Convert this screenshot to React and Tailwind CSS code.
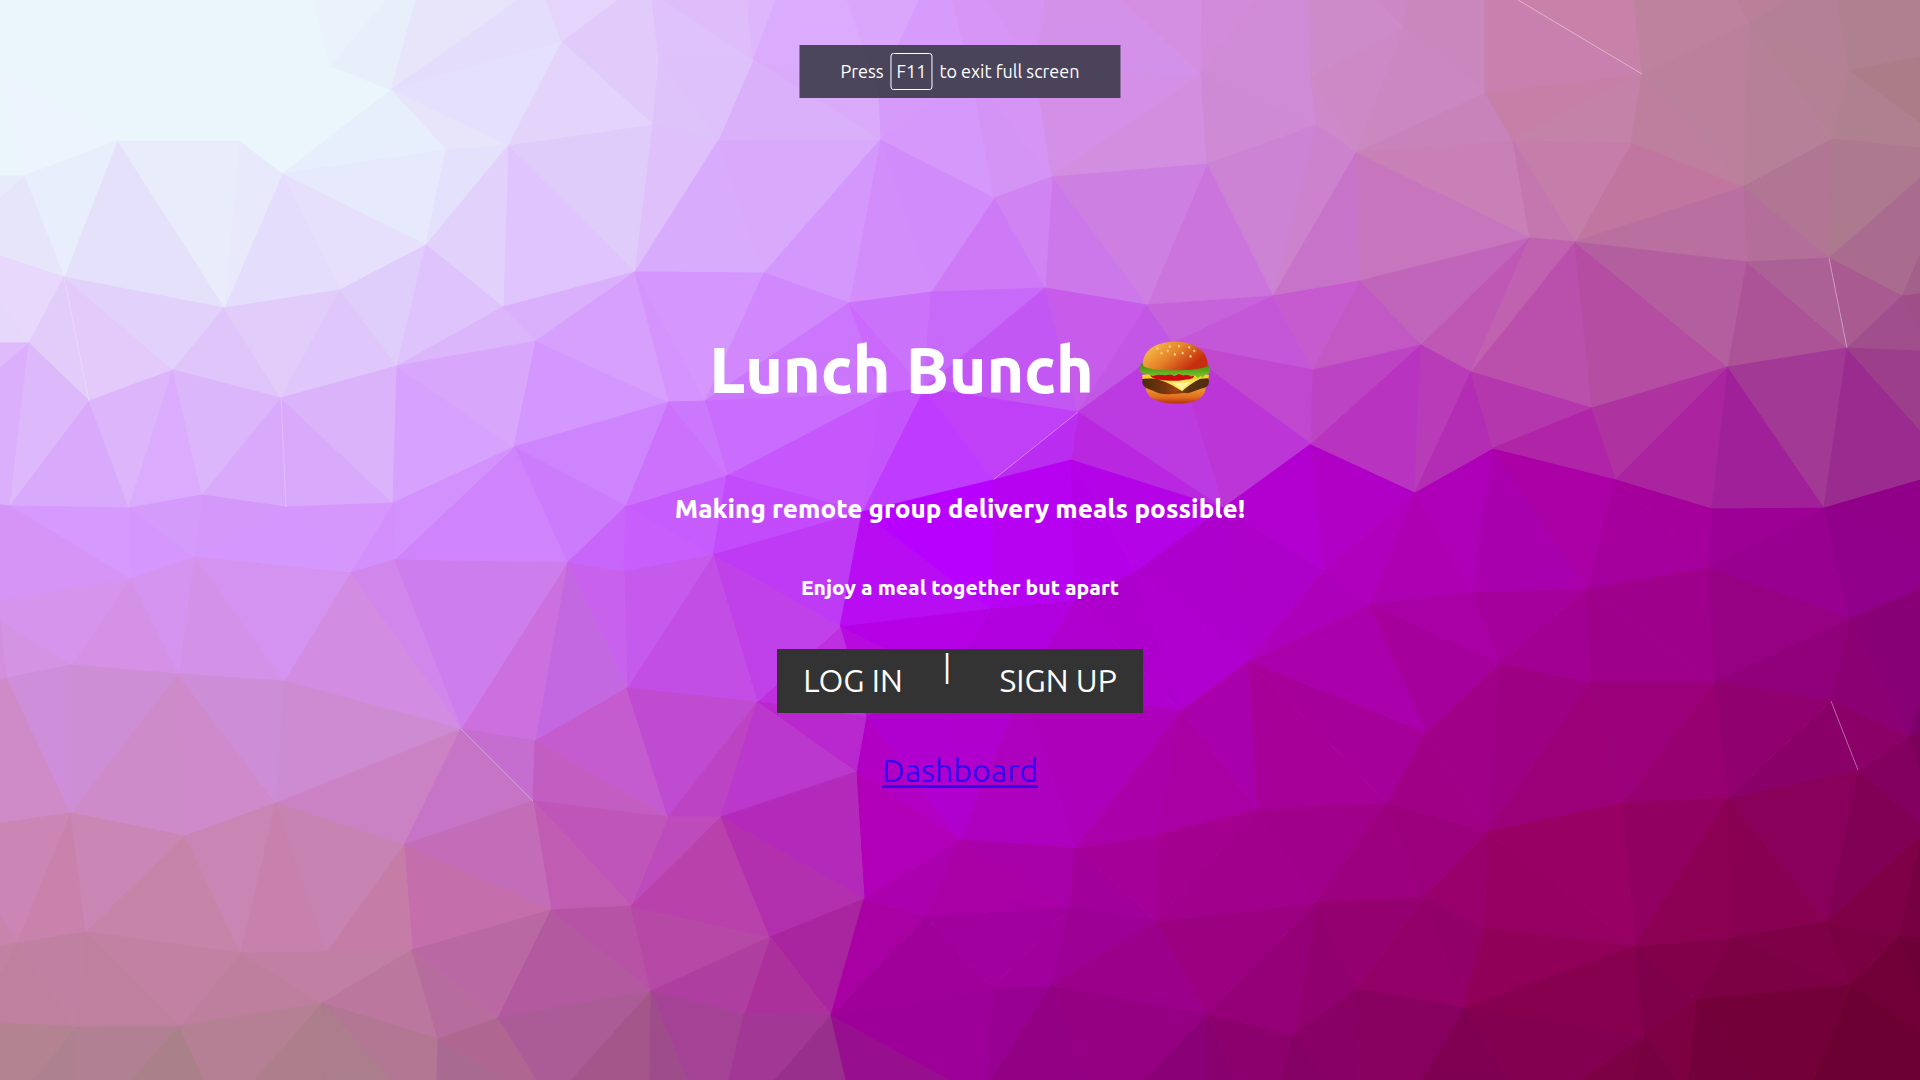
import React from "react";

const VERTICES = {
  A1: [24, 176], A2: [117, 141], A3: [239, 141], A4: [282, 174], A5: [391, 90], A6: [331, 66],
  A7: [446, 150], A8: [508, 146], A9: [562, 42], A10: [426, 245], A11: [340, 290], A12: [224, 308],
  A13: [64, 277], A14: [29, 343], A15: [89, 401], A16: [173, 370], A17: [281, 398], A18: [397, 366],
  A19: [503, 307], A20: [635, 272], A21: [536, 341], A22: [514, 447], A23: [393, 503], A24: [286, 507],
  A25: [202, 495], A26: [129, 508], A27: [10, 506], A28: [626, 506],
  B1: [659, 60], B2: [753, 60], B3: [653, 125], B4: [718, 141], B5: [880, 140], B6: [994, 198],
  B7: [1052, 177], B8: [1207, 164], B9: [764, 273], B10: [849, 303], B11: [931, 292], B12: [1045, 288],
  B13: [1147, 305], B14: [1273, 296], B15: [1078, 412], B16: [993, 480], B17: [1071, 460], B18: [727, 475],
  B19: [669, 402], B20: [705, 401], B21: [882, 394], B22: [924, 388], B23: [862, 512], B24: [1173, 343],
  B26: [878, 90], B27: [971, 72], B28: [1035, 69], B29: [1201, 74],
  C1: [1317, 125], C2: [1356, 153], C3: [1404, 28], C4: [1485, 93], C5: [1642, 74], C6: [1513, 141],
  C7: [1631, 143], C8: [1749, 23], C9: [1743, 187], C10: [1849, 71], C11: [1832, 139], C12: [1530, 238],
  C13: [1575, 242], C14: [1747, 262], C15: [1829, 258], C16: [1902, 296], C17: [1360, 281], C18: [1421, 345],
  C19: [1471, 372], C20: [1592, 408], C21: [1313, 370], C22: [1728, 367], C23: [1847, 348], C24: [1311, 444],
  C25: [1415, 492], C26: [1493, 448], C27: [1616, 479], C28: [1712, 508], C29: [1824, 507], C30: [1311, 77],
  D1: [130, 579], D2: [194, 557], D3: [350, 573], D4: [394, 560], D5: [567, 563], D6: [71, 665],
  D7: [7, 678], D8: [178, 674], D9: [284, 681], D10: [461, 729], D11: [535, 741], D12: [627, 688],
  D13: [71, 813], D14: [185, 836], D15: [276, 803], D16: [404, 845], D17: [533, 801], D18: [551, 910],
  D19: [631, 906], D20: [17, 943], D21: [86, 932], D22: [241, 953], D23: [327, 952], D24: [412, 950],
  D25: [322, 1003], D26: [76, 1027], D27: [180, 1026], D28: [438, 1039], D29: [498, 1018], D30: [624, 572],
  F1: [713, 555], F2: [840, 627], F3: [757, 702], F4: [668, 817], F5: [721, 817], F6: [866, 717],
  F7: [856, 772], F8: [864, 899], F9: [770, 937], F10: [651, 991], F11: [831, 1015], F12: [960, 840],
  F13: [1075, 848], F14: [991, 609], F15: [1075, 601], F16: [1136, 572], F17: [1249, 661], F18: [1181, 711],
  F19: [1258, 810], F20: [1156, 921], F21: [1070, 907], F22: [926, 917], F23: [992, 988], F24: [1051, 985],
  F25: [1207, 1014], F26: [744, 1014], F27: [1158, 835], F28: [1024, 688], F29: [948, 680],
  G1: [1223, 508], G2: [1323, 571], G3: [1370, 604], G4: [1472, 593], G5: [1587, 589], G6: [1709, 568],
  G7: [1850, 619], G8: [1500, 663], G9: [1590, 682], G10: [1714, 682], G11: [1831, 701], G12: [1909, 737],
  G13: [1858, 770], G14: [1728, 798], G15: [1622, 803], G16: [1426, 732], G17: [1387, 803], G18: [1487, 832],
  G19: [1423, 898], G20: [1316, 903], G21: [1484, 928], G22: [1356, 989], G23: [1464, 1008], G24: [1294, 1035],
  G25: [1635, 946], G26: [1734, 937], G27: [1826, 922], G28: [1696, 1000], G29: [1850, 985], G30: [1898, 938],
  G31: [1644, 1035],
};

// One facet per entry: corner names (or literal x/y where a facet meets the edge), then its fill.
const FACETS = `
0/0 386/0 A6 A5 A4 A3 A2 A1 0/176 #eaf6fc
3/72 A2 A1 #edf4fd
314/0 386/0 A6 #ebf2fc
386/0 416/0 A5 A6 #e8effb
416/0 518/0 A5 #e8e5fb
518/0 546/0 A9 A5 #e4defc
A5 A9 A8 #e5e0fd
A5 A8 A7 #e8e5fa
A5 A7 A4 #e8effc
A4 A7 A10 #e6eafc
A7 A8 A10 #e4e1fd
A9 546/0 618/0 #e5d5fc
A9 618/0 652/0 B1 #e1cbfb
A9 B1 B3 #e0cbfa
A9 A8 B3 #e4d4fc
A8 B3 A20 #e0ccfb
A8 A20 A19 #dfc4fd
A8 A19 A10 #e1d1fb
A4 A10 A11 #e6e0fd
A4 A11 A12 #e4ddfc
A3 A4 A12 #e8eafb
A2 A3 A12 #e9ecfb
A2 A12 A13 #e6e1fa
A1 A2 A13 #e8eefb
A1 A13 0/256 0/197 #e7e5fa
0/176 A1 0/197 #e8ecfa
0/256 A13 A14 0/303 #e8d8fb
0/303 A14 0/343 #e5d8fb
A13 A14 A15 #e2ccfa
A13 A15 A16 #e3cafb
A13 A16 A12 #e2d1fa
A12 A16 A17 #e0c5fb
A12 A17 A11 #e1ccfa
A11 A17 A18 #dfc7fc
A11 A18 A10 #dfcdfc
A10 A18 A19 #dec3fc
A18 A19 A21 #dcb6fb
A19 A20 A21 #daaffb
0/343 A14 0/368 #dfbbfb
0/368 A14 A27 0/505 #dbaffc
A14 A15 A27 #ddb8fb
A15 A26 A27 #d9a9fc
A15 A16 A26 #dcb5fa
A16 A25 A26 #dbabfd
A16 A17 A25 #dcb6fa
A17 A24 A25 #d9aafb
A17 A24 A23 #d9a9fc
A17 A23 A18 #dbb3fb
A18 A23 A22 #d6a2fd
A18 A22 A21 #d8a7fb
A21 A22 B19 #d496ff
A21 B19 A20 #d6a0fc
A22 B19 A28 #ce84fd
A22 A28 D5 #cd7bfd
A22 D5 D4 #cf84fc
A22 D4 A23 #d391fd
A23 D4 D3 #d38ffc
A23 D3 A24 #d597fc
A24 D3 D2 #d497fd
A24 D2 A25 #d498fb
A25 D2 A26 #d59bfb
A26 D2 D1 #d597fd
A26 D1 A27 #d699fd
0/505 A27 D1 0/601 #d694f6
A28 D5 D30 #c766f9
A28 D30 F1 #c85ffc
A28 B18 F1 #c75cfd
A28 B19 B18 #cb71fb
652/0 664/0 B2 B1 #dfc1fb
664/0 747/0 B2 #dfbdfb
747/0 776/0 B2 #ddb6fb
776/0 847/0 B26 B2 #dbacfd
847/0 919/0 B26 #d9a6fc
919/0 952/0 B27 B26 #d79bfb
B26 B27 B5 #d69afb
B2 B26 B5 #daabfb
B2 B5 B4 #dbb0fa
B1 B2 B4 #dec0fa
B1 B4 B3 #dec3fb
B3 B4 A20 #dfc0fb
B4 A20 B9 #d9abfd
B4 B5 B9 #d9a9fc
B27 B5 B6 #d598fb
B27 B6 B7 #d394f6
B27 952/0 987/0 B28 #d796f6
987/0 1045/0 B28 #d694f2
B27 B28 B7 #d694f5
B28 B29 B7 #d48fe6
1045/0 1122/0 B29 B28 #d491ea
1122/0 1202/0 B29 #d48ee2
B7 B29 B8 #d28fdf
1202/0 1256/0 B29 #d18bd9
1256/0 1309/0 C30 C1 B29 #cf8bd5
B29 C1 B8 #ce8ad5
B8 C1 B14 #cc83d3
B8 B14 B13 #cb74db
B7 B8 B13 #ce7fe2
B7 B13 B12 #cc78ea
B6 B7 B12 #cf84f2
B6 B12 B11 #ce7af6
B5 B6 B11 #d28bfb
B5 B11 B10 #d28dfb
B5 B10 B9 #d498fd
A20 B9 B20 #d597fd
A20 B20 B19 #d594fd
B9 B10 B20 #d188fd
B10 B20 B21 #cb76fc
B10 B21 B22 #ca69fc
B10 B11 B22 #cb72fb
B11 B12 B22 #c76afa
B12 B22 B15 #c357f4
B12 B13 B15 #c65ce9
B13 B24 B15 #c357e5
B13 B14 B24 #c663db
B14 B24 C21 #c457d8
B24 C21 C24 #bf48cf
B24 C24 G1 #bc35d6
B15 B24 G1 #bc3be1
B15 G1 B17 #b928e0
B15 B17 B16 #ba2df0
B22 B15 B16 #c040f7
B22 B16 B23 #bf3bff
B21 B22 B23 #c454fb
B21 B23 B18 #c557fd
B20 B21 B18 #ca6cfd
B19 B20 B18 #cc78fd
B18 B23 F1 #c34bfb
B23 F1 F2 #be3af5
B23 F2 F14 #b80cf3
B23 B16 F14 #b700ff
B16 B17 F15 F14 #b602f1
B17 F15 F16 #b400e8
B17 G1 F16 #b403e6
G1 F16 F17 #ae00cc
G1 C24 G2 #b100d0
G1 G2 F17 #ad00c8
F14 F15 F28 F29 #b000dd
F14 F2 F29 #b500e6
F15 F16 F18 #ad00cc
F15 F18 F28 #b000d0
F16 F17 F18 #b000d0
F2 F29 F6 #b60ade
F6 F29 F12 #b000d0
F29 F28 F12 #b000cd
F28 F18 F13 #ad00bb
F28 F13 F12 #ae00bf
F6 F7 F12 #b100c4
F7 F8 F12 #b200b8
F2 F3 F6 #be2fe0
F3 F6 F7 #b927cf
F1 F2 F3 #c041e7
D12 F1 F3 #c34ee6
D30 F1 D12 #c55aec
D5 D30 D12 #c862ed
D5 D12 D11 #c468e2
D5 D11 D10 #cb70de
D5 D10 D4 #cd7dec
D4 D10 D3 #d186eb
D3 D10 D9 #d28ce2
D3 D9 D2 #d493f0
D2 D9 D8 #d491e8
D2 D8 D1 #d594f0
D1 D8 D6 #d491e5
0/601 D1 D6 0/621 #d694ec
0/621 D6 D7 #d593e4
0/621 D7 0/680 #d48fdc
0/680 D7 D13 0/823 #cf8bc8
D7 D6 D13 #cf8ed9
D6 D8 D13 #ce8ed6
D8 D13 D14 #ce8bc9
D8 D14 D15 #ce8aca
D8 D9 D15 #ce8dd7
D9 D15 D10 #cd8cd2
D15 D10 D16 #cb82c4
D10 D16 D17 #c674c5
D10 D17 D11 #c56ecf
D11 D12 F4 #c45bce
D11 F4 D17 #c25ec2
D12 F3 F4 #bf4bd0
F3 F4 F5 #bd43c5
F3 F5 F7 #ba38cb
F5 F7 F8 #b32abb
F4 F5 D19 #be4bbb
D17 F4 D19 #bf55b9
D17 D19 D18 #c05db3
D16 D17 D18 #c36cb8
D16 D18 D24 #c46eab
0/823 D13 D20 0/915 #cb86b5
0/915 D20 0/946 #c984ab
D13 D20 D21 #c882ac
D13 D21 D14 #ca86b5
D14 D21 D22 #c684a8
D14 D22 D15 #c985b4
D15 D22 D23 #c881ad
D15 D23 D16 #c783b2
D16 D23 D24 #c57da8
0/946 D20 0/976 #c082a2
0/976 D20 D26 0/1023 #be809e
D20 D21 D26 #c080a1
D21 D26 D27 #bf809f
D21 D22 D27 #c280a3
D22 D27 D25 #be7f9f
D22 D25 D23 #c17fa3
D23 D25 D24 #c07fa3
D24 D25 D28 #bb779d
D24 D28 D29 #b66d9d
D24 D29 D18 #ba68a3
D18 D29 F10 #b3599f
D18 F10 D19 #b753a4
D19 F10 F9 #b549a5
D19 F9 F5 #b941ac
F5 F9 F8 #b22fad
F9 F8 F11 #a9249f
F9 F26 F11 #ab309c
F9 F10 F26 #ae3fa1
0/1023 D26 33/1080 0/1080 #b38392
D26 33/1080 75/1080 #ae8190
D26 75/1080 131/1080 D27 #b18092
D27 131/1080 204/1080 #aa8089
D27 204/1080 255/1080 D25 #b58094
D25 255/1080 322/1080 #ad7e8c
D25 322/1080 392/1080 #ac7d8d
D25 392/1080 437/1080 D28 #b17793
D28 437/1080 504/1080 #a96a91
D28 504/1080 537/1080 D29 #af6792
D29 537/1080 571/1080 F10 #ab5c97
F10 571/1080 650/1080 #a45589
F10 650/1080 688/1080 #9e4d8a
F10 688/1080 729/1080 F26 #a44396
F26 729/1080 775/1080 F11 #a23796
F11 775/1080 846/1080 #982f8c
F11 846/1080 950/1080 #970f8e
F11 950/1080 988/1080 F23 #9c0098
F23 988/1080 991/1080 F24 #980092
F24 991/1080 1085/1080 #920084
F24 1085/1080 1144/1080 F25 #950083
F25 1144/1080 1206/1080 #8a0076
F25 1206/1080 1235/1080 #880070
F25 G24 1282/1080 1235/1080 #8c006e
F8 F11 F22 #a900a3
F8 F22 F12 #ab00ae
F22 F12 F21 #a800a6
F12 F13 F21 #a700a8
F13 F21 F20 #a1009a
F13 F20 F27 #a50098
F13 F18 F27 #a900aa
F18 F19 F27 #a800a2
F19 F27 F20 #a30090
F17 F18 F19 #a800aa
F17 F19 G17 #a60099
F17 G17 G16 #a6009b
F17 G16 G3 #a900ab
F17 G2 G3 #ad00bb
C24 G2 C25 #b100c6
C25 G2 G3 #b000be
C25 G3 G4 #ad00b3
C25 C26 G4 #ae00b6
C26 G4 G5 #a900ae
C26 C27 G5 #ab00a6
C27 G5 G6 #a5009d
C27 C28 G6 #a5009b
C28 C29 G6 #9c0095
C29 G6 G7 #980090
C29 G7 1920/589 1920/545 #90008a
C29 1920/545 1920/479 #910089
F22 F11 F23 #a0009a
F22 F21 F23 #a2009e
F21 F23 F24 #a0009c
F21 F24 F20 #9c0094
F24 F20 F25 #9a0089
F20 F25 G20 #9a0080
F19 F20 G20 #a0008b
F19 G20 G17 #a00089
G17 G20 G19 #9c007f
G17 G19 G18 #9b007c
G16 G17 G18 #9f0086
G16 G8 G18 #9f0087
G8 G18 G9 #9e0084
G8 G3 G16 #a5009c
G3 G4 G8 #a800a4
G4 G5 G8 #a6009c
G5 G8 G9 #a20092
G5 G9 G10 #9e0089
G5 G6 G10 #9e008c
G6 G7 G10 #960083
G7 G10 G11 #90007a
G7 G11 G12 #8b0073
G7 G12 1920/705 1920/589 #870075
G12 1920/705 1920/733 #7c006a
G12 1920/733 1920/778 #7c0058
G12 G13 1920/823 1920/778 #830060
G13 1920/823 1920/836 G27 #7f0054
G13 G14 G27 #880059
G11 G13 G12 #8b0066
G11 G13 G14 #890068
G10 G11 G14 #90006e
G10 G14 G15 #960070
G9 G10 G15 #99007a
G9 G15 G18 #9b0078
G15 G14 G25 #910061
G15 G18 G25 #980063
G18 G21 G25 #960063
G18 G19 G21 #98006c
G19 G21 G23 #900066
G19 G22 G23 #930068
G19 G20 G22 #950070
G20 G22 G24 #90006e
G20 F25 G24 #950078
G21 G23 G25 #900059
G23 G25 G31 #87004f
G25 G31 G28 #7e004a
G25 G26 G28 #82004a
G14 G25 G26 #8b0052
G14 G26 G27 #870052
G26 G28 G29 #7c0044
G26 G27 G29 #7e0047
G27 G29 G30 #7a0042
G27 G30 1920/845 1920/836 #7e0046
G30 1920/845 1920/938 #760040
G30 1920/938 1920/995 #6d0036
G30 1920/995 1920/1032 G29 #700037
G29 1920/1032 1920/1080 1813/1080 #6d0032
G28 G29 1813/1080 1751/1080 #74003a
G28 1751/1080 1688/1080 #72003a
G28 G31 1676/1080 1688/1080 #7d0042
G31 1676/1080 1631/1080 #760040
G31 1631/1080 1580/1080 #7c0044
G23 G31 1580/1080 1507/1080 #830050
G23 1507/1080 1421/1080 #7f0052
G22 G23 1421/1080 1358/1080 #870060
G22 1358/1080 1325/1080 G24 #880064
G24 1325/1080 1282/1080 #840062
1309/0 1378/0 C3 C30 #cd8bc9
C30 C3 C2 #cc89c5
C1 C30 C2 #cd89ca
1378/0 1407/0 C3 #cb88c5
1407/0 1485/0 C4 C3 #ca87bd
C3 C4 C2 #ca87c0
C2 C4 C6 #c983bb
C2 C6 C12 #c880b7
1485/0 1518/0 C5 C4 #c881ae
1518/0 1634/0 C5 #c882a9
C4 C5 C6 #c680a8
C5 C6 C7 #c482a8
1634/0 1737/0 C8 C5 #be829f
1737/0 1786/0 C8 #bb8099
1786/0 1837/0 C10 C8 #b48095
C8 C10 C11 #b38094
C8 C11 C9 #b68098
C8 C5 C9 #bb809c
C5 C7 C9 #be7f9f
C7 C9 C13 #c0769f
C6 C7 C13 #c57da9
C6 C13 C12 #c476af
1837/0 1920/0 1920/57 C10 #ae8090
C10 1920/57 1920/124 #aa7d88
C10 1920/124 1920/148 C11 #af8090
C11 1920/148 1920/178 C15 #ad798f
C11 C9 C15 #b07694
C9 C14 C15 #b36e9a
C9 C13 C14 #b96f9f
C15 1920/178 1920/255 C16 #a96c8f
C16 1920/255 1920/294 #a2608a
C1 C2 B14 #cc82cd
C2 C17 B14 #c873ca
C2 C12 C17 #c775bd
C12 C17 C18 #c165bb
C12 C18 C19 #bf58b5
C12 C13 C19 #c162b0
C13 C19 C20 #bb50ac
C13 C20 C22 #b54da2
C13 C14 C22 #b35f9f
C14 C22 C23 #ac5397
C14 C15 C23 #ab6096
C15 C16 C23 #a85a91
C16 C23 1920/351 1920/331 #a14f8c
C16 1920/294 1920/331 #a04e88
B14 C17 C21 #c55bce
C17 C18 C21 #c158c4
C18 C21 C24 #bd43c5
C18 C24 C25 #b933c1
C18 C19 C25 #b83cb8
C19 C25 C26 #b32cb4
C19 C20 C26 #b537ae
C20 C26 C27 #b024a8
C20 C22 C27 #ae32a0
C22 C27 C28 #aa249f
C22 C28 C29 #a0209a
C22 C23 C29 #a23995
C23 C29 1920/479 1920/430 #9b2c8f
C23 1920/430 1920/351 #9d3e8b
`;

const point = (name) => VERTICES[name] || name.split("/").map(Number);

const facets = FACETS.trim()
  .split("\n")
  .map((line) => {
    const parts = line.split(" ");
    const fill = parts.pop();
    return { fill, points: parts.map((p) => point(p).join(",")).join(" ") };
  });

const GLINTS = [
  ["A13", "A15", 0.25],
  ["A17", "A24", 0.25],
  ["B15", "B16", 0.3],
  ["1518/0", "C5", 0.4],
  ["C15", "C23", 0.4],
  ["G11", "G13", 0.4],
  ["D10", "D17", 0.35],
];

function Backdrop() {
  return (
    <svg
      className="absolute inset-0 h-full w-full"
      viewBox="0 0 1920 1080"
      preserveAspectRatio="xMidYMid slice"
      aria-hidden="true"
    >
      {facets.map((f, i) => (
        <polygon key={i} points={f.points} fill={f.fill} stroke={f.fill} strokeWidth="1" strokeLinejoin="round" />
      ))}
      {GLINTS.map(([a, b, opacity]) => (
        <line
          key={a + b}
          x1={point(a)[0]}
          y1={point(a)[1]}
          x2={point(b)[0]}
          y2={point(b)[1]}
          stroke="#fff"
          strokeOpacity={opacity}
          strokeWidth="1"
        />
      ))}
    </svg>
  );
}

const SEEDS = [
  [108, 72], [144, 67], [171, 66], [201, 69], [216, 80], [120, 86], [138, 80], [159, 90], [182, 86], [205, 96],
];

function Burger() {
  return (
    <svg className="h-[63px] w-[73px]" viewBox="51 51 214 184" role="img" aria-label="Hamburger">
      <defs>
        <linearGradient id="bun" x1="0" y1="0.2" x2="1" y2="0.75">
          <stop offset="0" stopColor="#f9c247" />
          <stop offset="0.45" stopColor="#e5822a" />
          <stop offset="0.85" stopColor="#c62f0e" />
        </linearGradient>
        <linearGradient id="base" x1="0" y1="0" x2="0" y2="1">
          <stop offset="0" stopColor="#f09a34" />
          <stop offset="0.6" stopColor="#e2701f" />
          <stop offset="1" stopColor="#b52e0c" />
        </linearGradient>
        <linearGradient id="patty" x1="0" y1="0" x2="1" y2="0">
          <stop offset="0" stopColor="#4a2a0c" />
          <stop offset="0.35" stopColor="#7a3510" />
          <stop offset="0.5" stopColor="#a04010" />
          <stop offset="0.7" stopColor="#5a3210" />
          <stop offset="1" stopColor="#4e2c0e" />
        </linearGradient>
        <linearGradient id="leaf" x1="0" y1="0" x2="0" y2="1">
          <stop offset="0" stopColor="#3d8a06" />
          <stop offset="1" stopColor="#7cc832" />
        </linearGradient>
      </defs>
      <path d="M74 188 C76 220 110 234 162 234 C214 234 246 222 250 186 Z" fill="url(#base)" />
      <path d="M63 150 C90 146 230 144 259 150 L257 166 C230 172 90 172 65 164 Z" fill="#f7d21e" />
      <path d="M64 162 C90 160 128 160 150 168 C190 176 220 160 257 160 C262 172 258 184 246 188 C228 192 214 200 196 204 C178 200 166 208 150 206 C130 208 112 206 98 198 C84 190 60 190 64 162 Z" fill="url(#patty)" />
      <path d="M108 163 C140 166 200 166 236 160 C212 172 196 184 180 198 C166 190 146 174 108 163 Z" fill="#fbe34c" />
      <path d="M150 172 C166 174 196 172 206 171 C196 178 188 186 180 194 Z" fill="#fdf3a0" />
      <path d="M88 150 C110 146 190 146 216 152 C214 164 200 162 186 165 C160 170 104 168 88 154 Z" fill="#cc0812" />
      <path d="M52 124 L58 126 L60 116 L70 120 C90 132 230 132 258 122 C264 134 262 146 256 150 L248 147 L242 158 L234 153 L226 160 L218 152 L206 155 L196 148 L184 152 L172 147 L158 153 L146 149 L130 151 L112 149 L94 153 L78 147 L64 146 L54 140 L60 134 Z" fill="url(#leaf)" />
      <path d="M66 124 C62 80 100 53 160 53 C220 53 258 84 255 124 C236 140 90 142 66 124 Z" fill="url(#bun)" />
      {SEEDS.map(([x, y]) => (
        <ellipse key={x + "-" + y} cx={x} cy={y} rx="3" ry="4" fill="#fbd98a" />
      ))}
    </svg>
  );
}

export default function App() {
  return (
    <div className="relative flex min-h-screen flex-col items-center overflow-hidden font-['Ubuntu','Noto_Sans',sans-serif] text-white">
      <Backdrop />

      <div
        role="status"
        className="absolute top-[45px] left-1/2 flex -translate-x-1/2 items-center gap-[7px] bg-[#3b3b49]/90 px-[41px] py-2 text-[18px] leading-[23px] whitespace-nowrap"
      >
        <span>Press</span>
        <kbd className="rounded-[3px] border border-white px-[5px] py-[6px] font-['Ubuntu','Noto_Sans',sans-serif]">F11</kbd>
        <span>to exit full screen</span>
      </div>

      <main className="relative flex flex-col items-center pt-[329px] text-center">
        <h1 className="flex items-center gap-11 text-[64px] leading-[80px] font-extrabold">
          <span className="pb-1.5">Lunch Bunch</span>
          <Burger />
        </h1>
        <h2 className="mt-[76px] text-[26px] leading-9 font-extrabold">Making remote group delivery meals possible!</h2>
        <h3 className="mt-11 text-[21px] leading-8 font-extrabold">Enjoy a meal together but apart</h3>

        <nav className="mt-[46px] flex h-16 items-start bg-[#333] px-[26px] text-[32px] leading-10">
          <a href="#login" className="mt-[11px]">LOG IN</a>
          <span className="mr-12 ml-10 leading-[34px]" aria-hidden="true">|</span>
          <a href="#signup" className="mt-[11px]">SIGN UP</a>
        </nav>

        <a
          href="#dashboard"
          className="mt-[37px] text-[32px] leading-10 text-[#3300ee] underline decoration-[3px] underline-offset-[3px]"
        >
          Dashboard
        </a>
      </main>
    </div>
  );
}
